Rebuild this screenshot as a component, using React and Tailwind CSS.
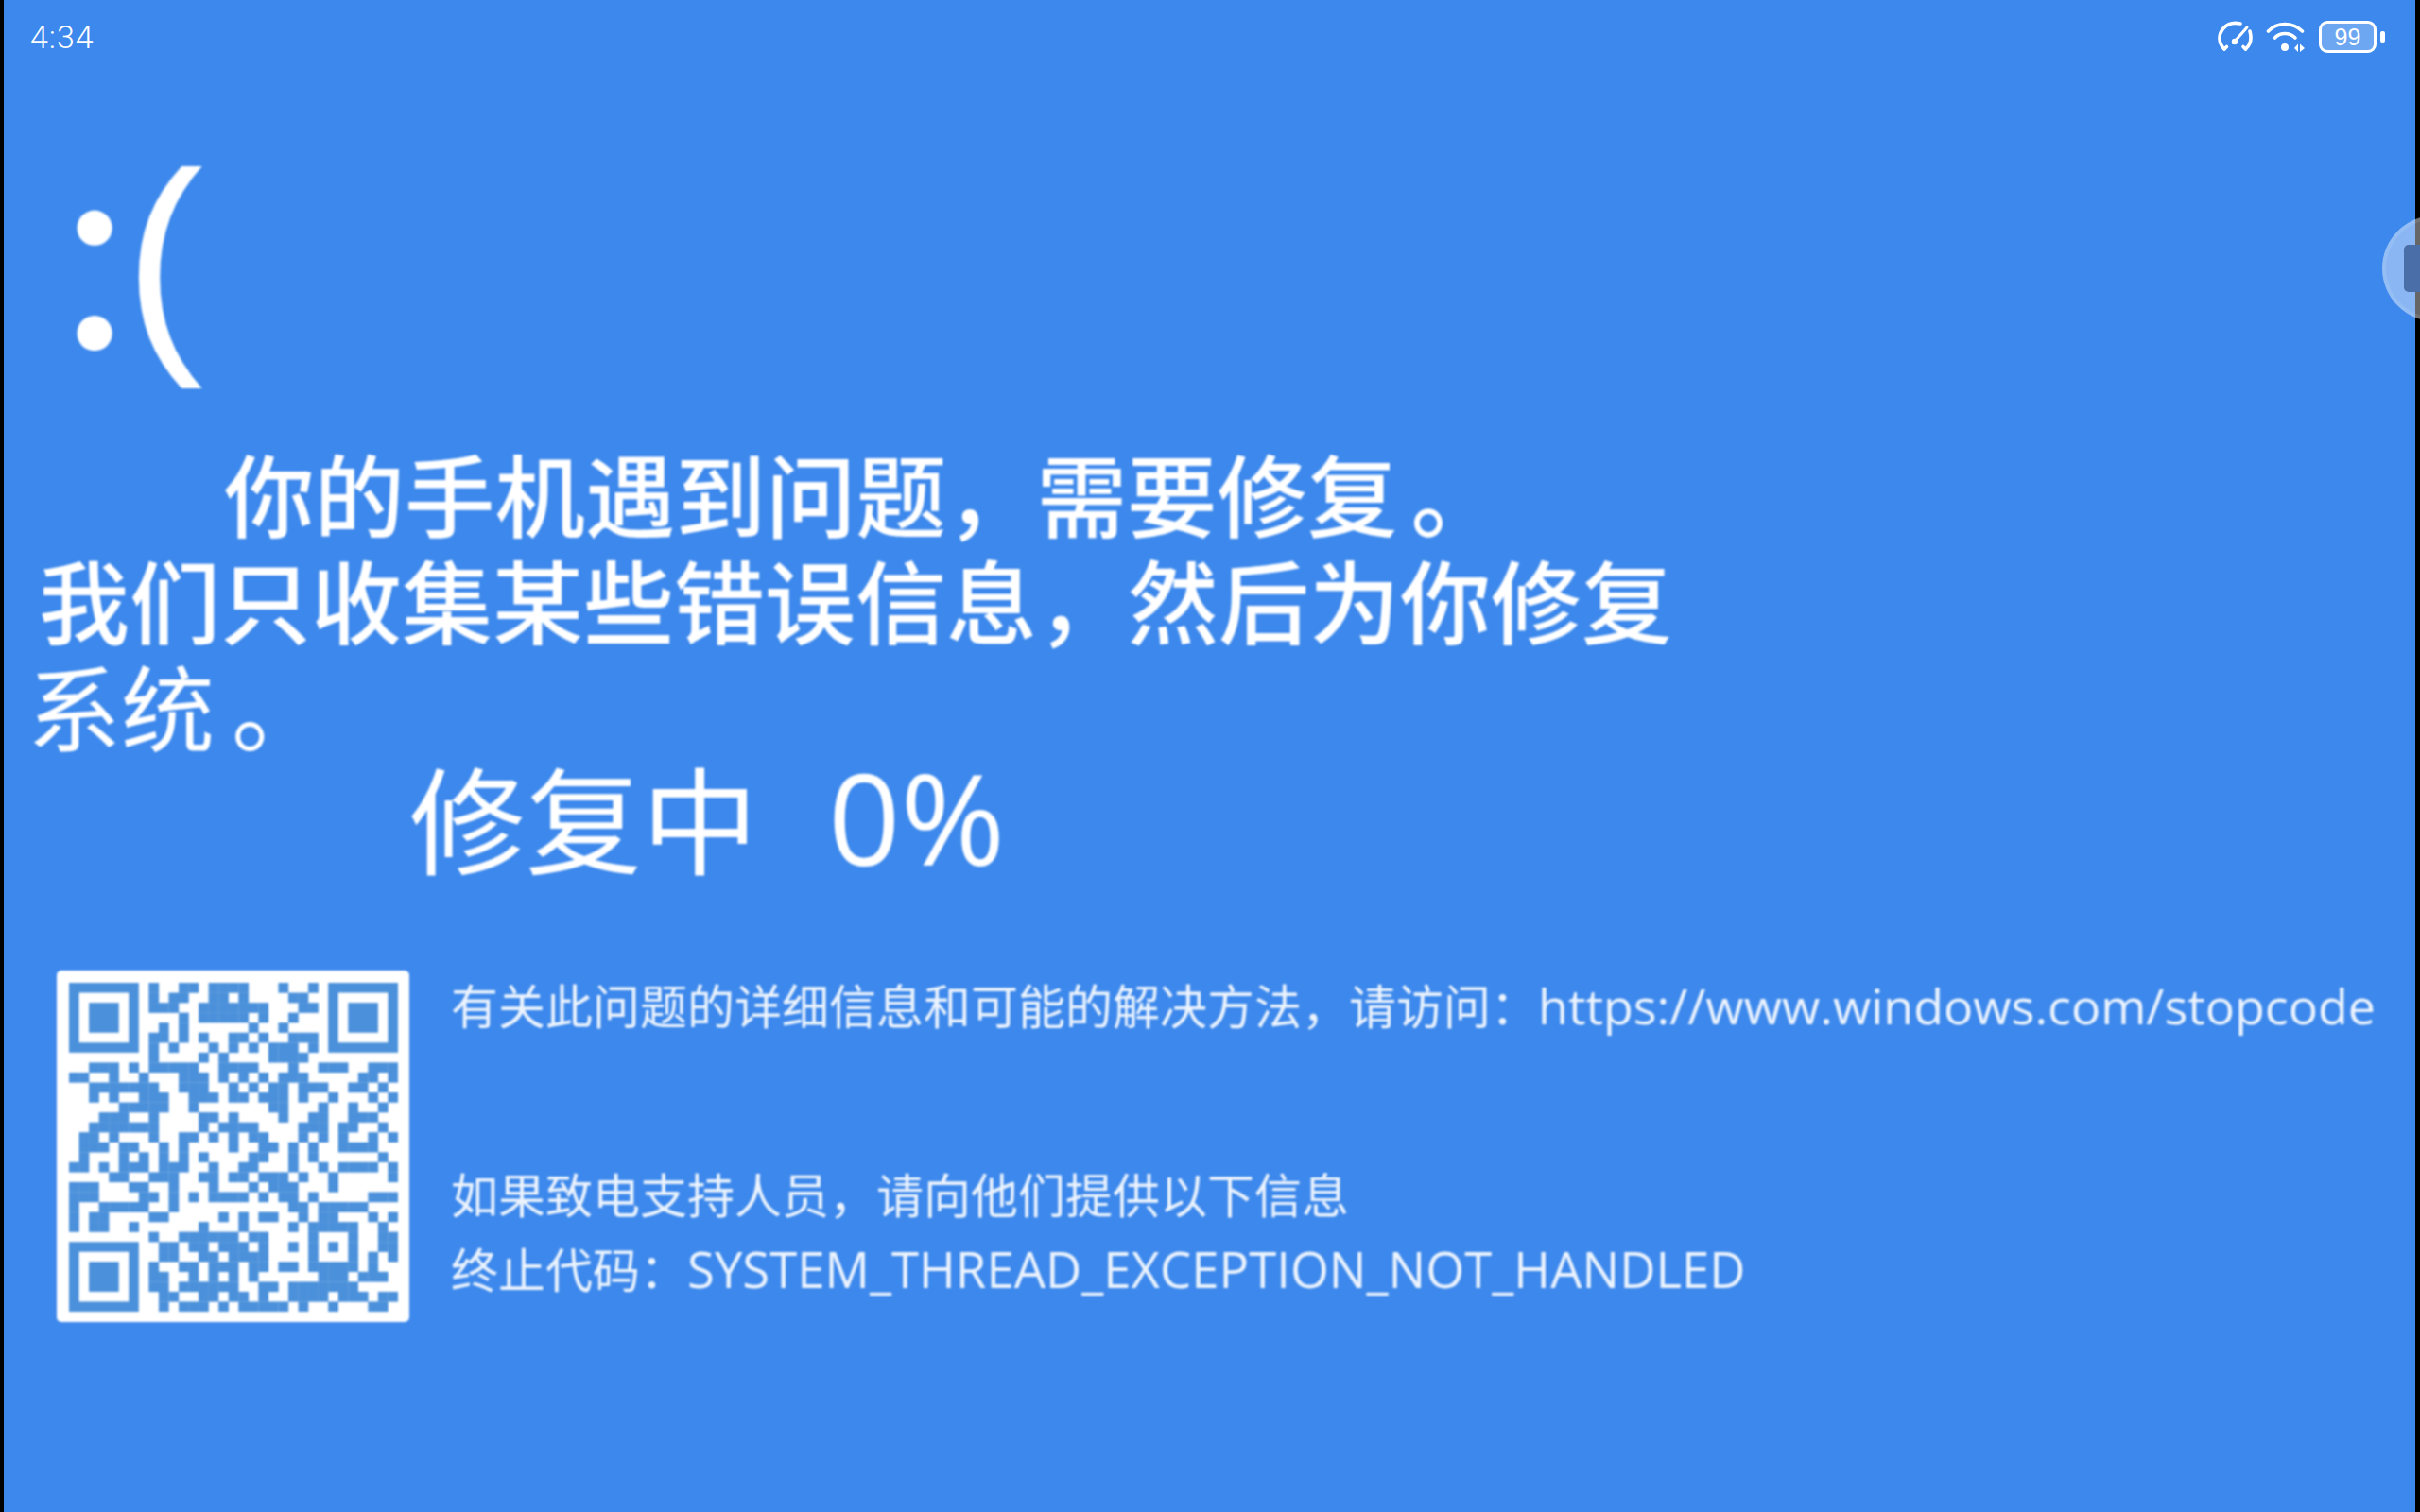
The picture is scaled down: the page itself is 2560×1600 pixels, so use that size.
const qrRows = [
  [8, 11, 12, 14, 15, 16, 17, 21, 24],
  [8, 10, 11, 14, 15, 17, 22, 23],
  [8, 9, 10, 13, 14, 15, 16, 17, 18, 19, 23, 24],
  [11, 13, 14, 15, 16, 17, 19, 22],
  [9, 11, 18, 21],
  [8, 9, 11, 13, 16, 17, 19, 22, 23, 24],
  [8, 10, 14, 16, 18, 20, 21, 22, 24],
  [8, 13, 15, 20, 21, 22, 23],
  [2, 3, 4, 6, 8, 9, 10, 11, 12, 15, 16, 17, 18, 22, 25, 26, 27, 30, 31, 32],
  [0, 1, 4, 7, 11, 12, 13, 15, 17, 19, 21, 22, 23, 29, 30, 32],
  [2, 3, 4, 5, 6, 7, 8, 11, 12, 13, 16, 18, 20, 21, 23, 24, 25, 28, 29, 31],
  [2, 4, 7, 8, 9, 12, 13, 14, 16, 17, 19, 20, 21, 23, 26, 30, 32],
  [5, 6, 7, 8, 9, 12, 20, 21, 25, 28, 31],
  [3, 4, 5, 8, 13, 14, 16, 21, 24, 25, 28, 29, 30],
  [2, 3, 4, 5, 6, 7, 8, 13, 15, 16, 17, 18, 23, 24, 25, 27, 28, 31],
  [1, 2, 4, 8, 11, 12, 14, 16, 18, 19, 23, 25, 27, 30, 32],
  [1, 2, 3, 5, 6, 9, 11, 16, 19, 20, 22, 24, 27, 28, 29, 30],
  [1, 5, 7, 9, 11, 13, 18, 19, 22, 24, 31],
  [0, 1, 3, 5, 6, 7, 9, 10, 11, 14, 17, 18, 22, 25, 27, 28, 29, 30, 32],
  [4, 5, 8, 9, 10, 13, 14, 16, 17, 19, 20, 21, 23, 26, 32],
  [0, 1, 2, 6, 7, 10, 14, 18, 20, 21, 22, 26],
  [0, 1, 2, 7, 8, 10, 12, 14, 15, 16, 17, 19, 21, 22, 24, 30, 31, 32],
  [0, 3, 4, 5, 6, 7, 10, 22, 23, 25, 26, 27, 28, 29],
  [0, 2, 3, 8, 9, 15, 17, 19, 20, 23, 25, 26, 30, 32],
  [0, 2, 3, 6, 13, 17, 22, 24, 25, 26, 27, 28, 31],
  [8, 11, 12, 13, 14, 15, 16, 18, 19, 24, 28, 31, 32],
  [9, 10, 12, 13, 15, 16, 17, 19, 22, 24, 26, 28, 31, 32],
  [9, 10, 13, 14, 16, 17, 18, 19, 24, 28, 30, 32],
  [8, 11, 12, 14, 15, 16, 18, 19, 21, 22, 24, 25, 26, 27, 28, 30],
  [8, 9, 12, 14, 16, 18, 25, 26, 27, 29, 30, 31],
  [8, 9, 11, 12, 13, 14, 15, 16, 19, 20, 22, 23, 24, 25, 26, 27, 28],
  [9, 10, 13, 14, 16, 17, 19, 22, 23, 24, 25, 27, 28, 29, 31, 32],
  [9, 11, 12, 13, 15, 17, 18, 19, 20, 21, 23, 26, 30, 31],
];

function Finder({ x, y }) {
  return (
    <g>
      <rect x={x + 0.5} y={y + 0.5} width="6" height="6" fill="none" stroke="#4a90da" strokeWidth="1" />
      <rect x={x + 2} y={y + 2} width="3" height="3" fill="#4a90da" />
    </g>
  );
}

function QrCode() {
  return (
    <div className="w-[373px] h-[372px] shrink-0 bg-white rounded-[5px] p-[13px]">
      <svg viewBox="0 0 33 33" className="w-[348px] h-[348px] block">
        <Finder x={0} y={0} />
        <Finder x={26} y={0} />
        <Finder x={0} y={26} />
        {qrRows.map((cols, r) =>
          cols.map((c) => (
            <rect key={r + "-" + c} x={c} y={r} width="1.02" height="1.02" fill="#4a90da" />
          ))
        )}
      </svg>
    </div>
  );
}

function StatusIcons() {
  return (
    <div className="flex items-center">
      {/* speed gauge */}
      <svg viewBox="0 0 38 34" className="w-[38px] h-[34px]" fill="none" stroke="white" strokeWidth="3.6" strokeLinecap="round">
        <path d="M7 30 C1 24 0 15 6 8 C10 3.500 17 1.500 24 3" />
        <path d="M34 11 C36 18 35 25 29.500 30" />
        <path d="M7 30 L9.500 27.500 M29.500 30 L27 27.500" />
        <path d="M16.500 23.500 L31 7" strokeWidth="3" />
        <circle cx="18" cy="22" r="3.200" fill="white" stroke="none" />
      </svg>
      {/* wifi */}
      <svg viewBox="0 0 42 34" className="w-[42px] h-[34px] ml-[13px]" fill="none" stroke="white" strokeWidth="3.6" strokeLinecap="round">
        <path d="M2.500 11 C12 1 28 1 38.500 11" />
        <path d="M9.500 18 C15 12 25 12 31 18" />
        <circle cx="20" cy="28" r="4" fill="white" stroke="none" />
        <path d="M30 29 L34 24.500 L34 33 Z" fill="white" stroke="none" />
        <path d="M36 24.500 L41 29 L36 33 Z" fill="white" stroke="none" />
      </svg>
      {/* battery */}
      <div className="ml-[14px] w-[61px] h-[34px] rounded-[9px] border-[3px] border-white bg-white/25 flex items-center justify-center text-[25px] leading-none text-white font-['Liberation_Sans',sans-serif]">
        99
      </div>
      <div className="ml-[4px] w-[5px] h-[12px] rounded-[2px] bg-white" />
    </div>
  );
}

export default function App() {
  return (
    <div className="relative w-[2560px] h-[1600px] overflow-hidden bg-black flex">
      <div className="ml-[4px] w-[2551px] h-full bg-[#3c88ec] text-white flex flex-col font-['Noto_Sans_CJK_SC',sans-serif]">
        <div className="h-[78px] flex items-center justify-between pl-[28px] pr-[32px]">
          <span className="text-[34px] font-light tracking-[1px] leading-none font-['Roboto',sans-serif]">4:34</span>
          <StatusIcons />
        </div>

        <div className="blur-[0.8px]">
          {/* colon from Lato for the round dots, bracket from Liberation for the pointed ends */}
          <div className="ml-[59px] mt-[51px] h-[250px] leading-[250px] whitespace-nowrap">
            <span className="text-[297px] font-['Lato',sans-serif] mr-[-6px] [vertical-align:-10px]">:</span>
            <span className="text-[252px] font-['Liberation_Sans',sans-serif]">(</span>
          </div>

          <div className="mt-[86px] text-[96px] leading-[112px]">
            <p className="ml-[233px] text-[95.5px] font-medium">
              你的手机遇到问题，需要修复<span className="ml-[14px]">。</span>
            </p>
            <p className="ml-[37px] font-medium">我们只收集某些错误信息，然后为你修复</p>
            <p className="ml-[25px] text-[99px]">
              系统<span className="ml-[18px]">。</span>
            </p>
          </div>

          <p className="ml-[429px] mt-[-5px] text-[123px] leading-[132px] whitespace-pre">
            修复中<span className="ml-[74px] text-[134px] font-['Open_Sans',sans-serif]">0%</span>
          </p>

          <div className="mt-[97px] ml-[56px] flex">
            <QrCode />
            <div className="ml-[44px] text-[50px] text-white/90 font-['Open_Sans','Noto_Sans_CJK_SC',sans-serif]">
              <p className="leading-[70px] mt-[2px] whitespace-nowrap">
                有关此问题的详细信息和可能的解决方法，请访问：<span className="text-[52px]">https://www.windows.com/stopcode</span>
              </p>
              <p className="leading-[70px] mt-[130px] whitespace-nowrap">如果致电支持人员，请向他们提供以下信息</p>
              <p className="leading-[70px] mt-[8px] whitespace-nowrap">
                终止代码：<span className="text-[52.7px]">SYSTEM_THREAD_EXCEPTION_NOT_HANDLED</span>
              </p>
            </div>
          </div>
        </div>
      </div>

      {/* floating assistive ball, clipped by the right edge */}
      <div className="absolute left-[2520px] top-[228px] w-[112px] h-[112px] rounded-full bg-white/40 border-[4px] border-white/10 flex items-center">
        <div className="ml-[19px] w-[40px] h-[50px] rounded-[5px] bg-[#4a6ea8]" />
      </div>
    </div>
  );
}
